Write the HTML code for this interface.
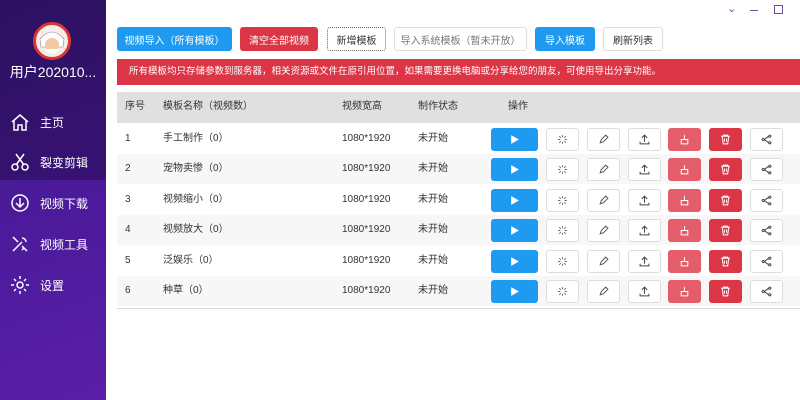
<!DOCTYPE html>
<html><head><meta charset="utf-8"><style>
*{margin:0;padding:0;box-sizing:border-box}
body{width:800px;height:400px;overflow:hidden;font-family:"Liberation Sans","Noto Sans CJK SC",sans-serif;background:#fff;position:relative}
.side{position:absolute;left:0;top:0;width:106px;height:400px;background:linear-gradient(160deg,#3a1a7a 0%,#4b1a9a 50%,#5a1fa8 100%)}
.side .dark{position:absolute;left:0;top:0;width:106px;height:180px;background:rgba(20,5,50,.35)}
.av{position:absolute;left:33px;top:22px;width:38px;height:38px;border-radius:50%;background:#f4ece6;border:3px solid #d33;overflow:hidden}
.uname{position:absolute;left:0;width:106px;top:62px;text-align:center;color:#fff;font-size:14px}
.item{position:absolute;left:10px;color:#fff;font-size:12px;display:flex;align-items:center}
.item svg{width:20px;height:20px;margin-right:10px}
.btn{position:absolute;top:27px;height:24px;font-size:10px;display:flex;align-items:center;justify-content:center;border-radius:3px}
.banner{position:absolute;left:117px;top:59px;width:683px;height:26px;background:#dc3545;color:#fff;font-size:9.5px;line-height:26px;padding-left:12px}
.thead{position:absolute;left:117px;top:92px;width:683px;height:31px;background:#e0e0e0;font-size:10px;color:#333}
.t{position:absolute;font-size:10px;color:#333;top:0;line-height:30px;height:30px}
.row{position:absolute;left:117px;width:683px;height:30px}
.ib{position:absolute;width:33px;height:23px;border-radius:3px;display:flex;align-items:center;justify-content:center;border:1px solid #ddd;background:#fff}
.ib svg{width:11px;height:11px}
</style></head><body>
<div class="side"><div class="dark"></div>
<div class="av"><svg viewBox="0 0 32 32" width="32" height="32"><path d="M4 14Q16 0 28 14L27 22H5z" fill="#fff" stroke="#888" stroke-width=".6"/><circle cx="16" cy="20" r="7" fill="#f2c9a0"/><path d="M9 24Q16 34 23 24" fill="#fff"/></svg></div>
<div class="uname">用户202010...</div>
<div class="item" style="top:112px"><svg viewBox="0 0 20 20" fill="none" stroke="#fff" stroke-width="1.5"><path d="M2 10L10 3l8 7M4 8v10h4v-5h4v5h4V8"/></svg>主页</div>
<div class="item" style="top:152px"><svg viewBox="0 0 20 20" fill="none" stroke="#fff" stroke-width="1.5"><circle cx="5" cy="15" r="3"/><circle cx="15" cy="15" r="3"/><path d="M6 13L14 2M14 13L6 2"/></svg>裂变剪辑</div>
<div class="item" style="top:193px"><svg viewBox="0 0 20 20" fill="none" stroke="#fff" stroke-width="1.5"><circle cx="10" cy="10" r="8"/><path d="M10 5v9M6 10l4 4 4-4"/></svg>视频下载</div>
<div class="item" style="top:234px"><svg viewBox="0 0 20 20" fill="none" stroke="#fff" stroke-width="1.5"><path d="M3 17l9-9M12 4a4 4 0 0 1 4 4M3 3l5 5M12 12l5 5M14 14l-2 2"/></svg>视频工具</div>
<div class="item" style="top:275px"><svg viewBox="0 0 20 20" fill="none" stroke="#fff" stroke-width="1.5"><circle cx="10" cy="10" r="3"/><path d="M10 1v3M10 16v3M1 10h3M16 10h3M4 4l2 2M14 14l2 2M4 16l2-2M14 6l2-2"/></svg>设置</div>
</div>
<div style="position:absolute;left:727px;top:2px;color:#6a4aa0;font-size:11px">⌄</div>
<div style="position:absolute;left:750px;top:10px;width:8px;height:1px;background:#6a4aa0"></div>
<div style="position:absolute;left:774px;top:5px;width:9px;height:9px;border:1px solid #6a4aa0"></div>
<div class="btn" style="left:117px;width:115px;background:#1e9bf0;color:#fff">视频导入（所有模板）</div>
<div class="btn" style="left:240px;width:78px;background:#dc3545;color:#fff">清空全部视频</div>
<div class="btn" style="left:327px;width:59px;border:1px dotted #666;color:#333">新增模板</div>
<div class="btn" style="left:394px;width:133px;border:1px solid #ddd;color:#777">导入系统模板（暂未开放）</div>
<div class="btn" style="left:535px;width:60px;background:#1e9bf0;color:#fff">导入模板</div>
<div class="btn" style="left:603px;width:60px;border:1px solid #ddd;color:#333">刷新列表</div>
<div class="banner">所有模板均只存储参数到服务器，相关资源或文件在原引用位置，如果需要更换电脑或分享给您的朋友，可使用导出分享功能。</div>
<div class="thead">
<span class="t" style="left:8px">序号</span><span class="t" style="left:46px">模板名称（视频数）</span><span class="t" style="left:225px">视频宽高</span><span class="t" style="left:301px">制作状态</span><span class="t" style="left:391px">操作</span></div>
<div style="position:absolute;left:117px;top:123px;width:683px;height:186px;border-bottom:1px solid #ddd"></div>
<div id="rows"></div>
<script>
const names=["手工制作（0）","宠物卖惨（0）","视频缩小（0）","视频放大（0）","泛娱乐（0）","种草（0）"];
let h="";
names.forEach((n,i)=>{const y=124+i*30.4;
h+=`<div class="row" style="top:${y}px;background:${i%2?'#f7f7f7':'#fff'}">
<span class="t" style="left:8px">${i+1}</span><span class="t" style="left:46px">${n}</span><span class="t" style="left:225px">1080*1920</span><span class="t" style="left:301px">未开始</span>
<div class="ib" style="left:374px;width:47px;top:4px;background:#1e9bf0;border-color:#1e9bf0"><svg viewBox="0 0 10 10"><path d="M2 1l7 4-7 4z" fill="#fff"/></svg></div>
<div class="ib" style="left:429px;top:4px"><svg viewBox="0 0 10 10" stroke="#666" stroke-width=".8"><path d="M5 1v2M5 7v2M1 5h2M7 5h2M2 2l1.5 1.5M6.5 6.5L8 8M2 8l1.5-1.5M6.5 3.5L8 2"/></svg></div>
<div class="ib" style="left:470px;top:4px"><svg viewBox="0 0 10 10" fill="none" stroke="#555" stroke-width=".9"><path d="M2 8l1-3 4-4 2 2-4 4z"/></svg></div>
<div class="ib" style="left:511px;top:4px"><svg viewBox="0 0 10 10" fill="none" stroke="#444" stroke-width=".9"><path d="M5 7V1M2.5 3.5L5 1l2.5 2.5M1 7v2h8V7"/></svg></div>
<div class="ib" style="left:551px;top:4px;background:#e35d6a;border-color:#e35d6a"><svg viewBox="0 0 10 10" fill="none" stroke="#fff" stroke-width=".9"><path d="M2 5h6v4H2zM5 5V1"/></svg></div>
<div class="ib" style="left:592px;top:4px;background:#dc3545;border-color:#dc3545"><svg viewBox="0 0 10 10" fill="none" stroke="#fff" stroke-width=".9"><path d="M1 2h8M3 2V1h4v1M2 2l1 7h4l1-7M4 4v3M6 4v3"/></svg></div>
<div class="ib" style="left:633px;top:4px"><svg viewBox="0 0 10 10" fill="none" stroke="#444" stroke-width=".9"><circle cx="8" cy="2" r="1"/><circle cx="2" cy="5" r="1"/><circle cx="8" cy="8" r="1"/><path d="M3 5l4-3M3 5l4 3"/></svg></div>
</div>`});
document.getElementById('rows').innerHTML=h;
</script>
</body></html>
